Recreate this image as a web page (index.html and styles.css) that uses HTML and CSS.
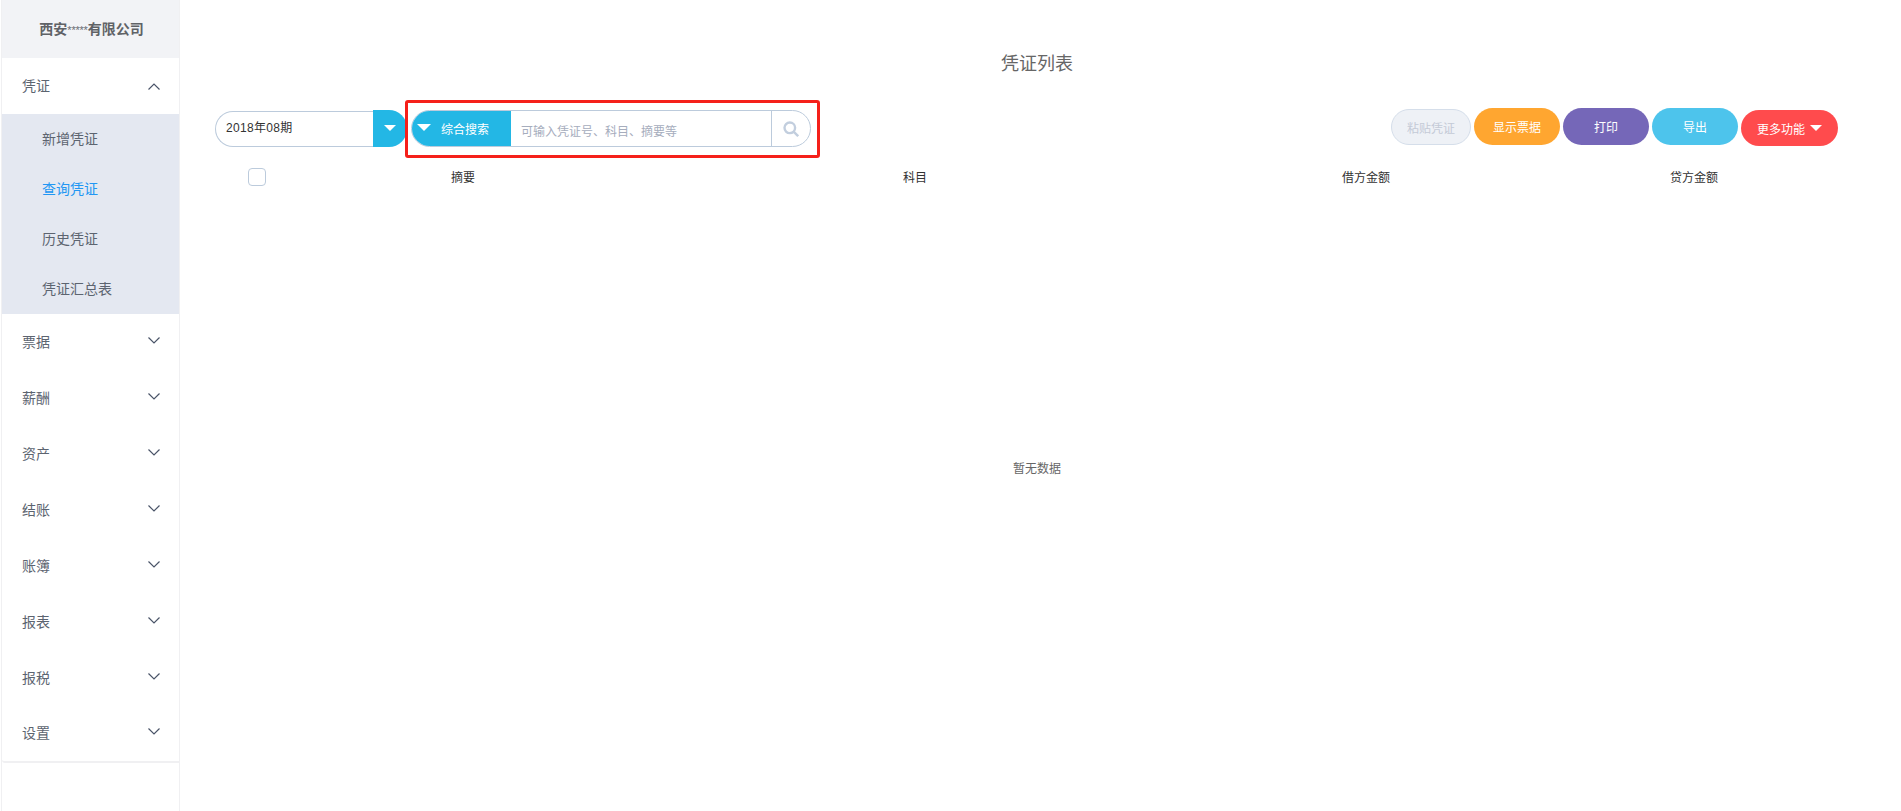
FILE: index.html
```html
<!DOCTYPE html>
<html lang="zh">
<head>
<meta charset="utf-8">
<title>凭证列表</title>
<link rel="stylesheet" href="styles.css">
</head>
<body>
<div class="app">
  <aside class="sidebar">
    <div class="company"><span>西安<span class="stars">*****</span>有限公司</span></div>
    <div class="menu-item"><span>凭证</span><svg class="chev up" viewBox="0 0 12 7"><path d="M.5 6.500 6 1l5.500 5.500"/></svg></div>
    <div class="submenu">
      <div class="sub-item"><span>新增凭证</span></div>
      <div class="sub-item active"><span>查询凭证</span></div>
      <div class="sub-item"><span>历史凭证</span></div>
      <div class="sub-item"><span>凭证汇总表</span></div>
    </div>
    <div class="menu-item"><span>票据</span><svg class="chev" viewBox="0 0 12 7"><path d="M.5.500 6 6l5.500-5.500"/></svg></div>
    <div class="menu-item"><span>薪酬</span><svg class="chev" viewBox="0 0 12 7"><path d="M.5.500 6 6l5.500-5.500"/></svg></div>
    <div class="menu-item"><span>资产</span><svg class="chev" viewBox="0 0 12 7"><path d="M.5.500 6 6l5.500-5.500"/></svg></div>
    <div class="menu-item"><span>结账</span><svg class="chev" viewBox="0 0 12 7"><path d="M.5.500 6 6l5.500-5.500"/></svg></div>
    <div class="menu-item"><span>账簿</span><svg class="chev" viewBox="0 0 12 7"><path d="M.5.500 6 6l5.500-5.500"/></svg></div>
    <div class="menu-item"><span>报表</span><svg class="chev" viewBox="0 0 12 7"><path d="M.5.500 6 6l5.500-5.500"/></svg></div>
    <div class="menu-item"><span>报税</span><svg class="chev" viewBox="0 0 12 7"><path d="M.5.500 6 6l5.500-5.500"/></svg></div>
    <div class="menu-item last"><span>设置</span><svg class="chev" viewBox="0 0 12 7"><path d="M.5.500 6 6l5.500-5.500"/></svg></div>
  </aside>
  <main class="main">
    <h1 class="title">凭证列表</h1>
    <div class="toolbar">
      <div class="filters">
        <div class="period">
          <span class="period-text">2018年08期</span>
          <span class="period-btn"><i class="tri"></i></span>
        </div>
        <div class="search-outline">
          <div class="search">
            <span class="search-type"><i class="tri big"></i><span>综合搜索</span></span>
            <span class="search-input"><span class="placeholder">可输入凭证号、科目、摘要等</span></span>
            <span class="search-btn"><svg viewBox="0 0 16 16" class="mag"><circle cx="6.800" cy="6.800" r="5.300"/><path d="m10.800 10.800 4.400 4.400"/></svg></span>
          </div>
        </div>
      </div>
      <div class="actions">
        <span class="btn disabled">粘贴凭证</span>
        <span class="btn orange">显示票据</span>
        <span class="btn purple">打印</span>
        <span class="btn sky">导出</span>
        <span class="btn red">更多功能<i class="tri"></i></span>
      </div>
    </div>
    <div class="thead">
      <span class="check"></span>
      <span class="col c1">摘要</span>
      <span class="col c2">科目</span>
      <span class="col c3">借方金额</span>
      <span class="col c4">贷方金额</span>
    </div>
    <div class="empty">暂无数据</div>
  </main>
</div>
</body>
</html>
```
FILE: styles.css
```css
* { box-sizing: border-box; }
html, body { margin: 0; height: 100%; }
body {
  font-family: "Liberation Sans", "Noto Sans CJK SC", sans-serif;
  font-size: 12px;
  color: #333;
  background: #fff;
  overflow: hidden;
}
.app { display: flex; height: 811px; }
.sidebar {
  width: 179px;
  flex: none;
  margin-left: 1px;
  border-left: 1px solid #f0f0f2;
  border-right: 1px solid #f0f0f2;
}
.company {
  height: 58px;
  padding: 0 0 2px 2px;
  background: #f2f3f6;
  display: flex;
  align-items: center;
  justify-content: center;
  font-size: 14px;
  font-weight: bold;
  color: #606266;
}
.stars { font-size: 11px; font-weight: normal; letter-spacing: -.2px; color: #6a6d74; }
.menu-item {
  height: 56px;
  padding: 0 19px 0 20px;
  display: flex;
  align-items: center;
  justify-content: space-between;
  font-size: 14px;
  color: #5c6470;
}
.menu-item span { margin-top: -2px; }
.menu-item.last { height: 57px; padding-bottom: 1px; border-bottom: 2px solid #f0f0f2; border-bottom-left-radius: 3px; }
.chev { width: 12px; height: 7px; margin-top: -4px; fill: none; stroke: #4a5468; stroke-width: 1.200; }
.chev.up { margin-top: 0; }
.submenu { background: #e4e8f1; }
.sub-item {
  height: 50px;
  padding: 0 0 2px 40px;
  display: flex;
  align-items: center;
  font-size: 14px;
  color: #5c6470;
}
.sub-item.active { color: #2196f3; }
.main { flex: 1; margin-right: 7px; padding: 0 35px; min-width: 0; }
.title {
  margin: 0;
  padding-top: 52px;
  height: 100px;
  line-height: 24px;
  text-align: center;
  font-size: 18px;
  font-weight: normal;
  color: #666;
}
.toolbar { display: flex; justify-content: space-between; align-items: flex-start; height: 58px; }
.filters { display: flex; align-items: flex-start; }
.tri {
  display: inline-block;
  width: 0; height: 0;
  margin-top: -2px;
  border-left: 6px solid transparent;
  border-right: 6px solid transparent;
  border-top: 6px solid #fff;
}
.tri.big {
  border-left-width: 7px;
  border-right-width: 7px;
  border-top-width: 7px;
}
.period { width: 192px; display: flex; margin-top: 10px; }
.period-text {
  flex: 1;
  height: 36px;
  margin-top: 1px;
  padding-left: 10px;
  line-height: 33px;
  letter-spacing: .3px;
  border: 1px solid #bccbdc;
  border-right: 0;
  border-radius: 18px 0 0 18px;
  color: #333;
}
.period-btn {
  width: 34px;
  height: 37px;
  background: #23b7e5;
  border-radius: 0 18px 18px 0;
  display: flex;
  align-items: center;
  justify-content: center;
}
.search-outline {
  width: 415px;
  height: 58px;
  border: 3px solid #f5201a;
  border-radius: 3px;
  padding: 7px 0 0 3px;
  margin-left: -2px;
  position: relative;
}
.search {
  width: 400px;
  height: 37px;
  display: flex;
  border: 1px solid #bccbdc;
  border-radius: 19px;
  overflow: hidden;
}
.search-type {
  width: 100px;
  margin: -1px 0 -1px -1px;
  background: #23b7e5;
  color: #fff;
  display: flex;
  align-items: center;
  padding-left: 6px;
  gap: 10px;
  flex: none;
}
.search-input { flex: 1; padding-left: 10px; line-height: 35px; color: #a6adbd; }
.placeholder { position: relative; top: 4px; }
.search-btn {
  width: 39px;
  flex: none;
  border-left: 1px solid #bccbdc;
  display: flex;
  align-items: center;
  justify-content: center;
}
.mag { width: 16px; height: 16px; fill: none; stroke: #c2cede; stroke-width: 2.400; }
.actions { display: flex; align-items: flex-start; gap: 3px; margin: 8px 21px 0 0; }
.btn {
  height: 37px;
  width: 86px;
  border-radius: 19px;
  display: flex;
  align-items: center;
  justify-content: center;
  color: #fff;
}
.btn.disabled { width: 80px; height: 36px; margin-top: 1px; background: #eef1f6; border: 1px solid #d5deea; color: #c4cad6; }
.orange { background: #ffa630; }
.purple { background: #7567b8; }
.sky { background: #4dc4ec; }
.btn.red { width: 97px; height: 36px; margin-top: 2px; background: #ff4b4d; gap: 5px; }
.btn.red .tri { margin-top: 0; }
.thead { height: 40px; position: relative; }
.check {
  position: absolute;
  left: 33px;
  top: 10px;
  width: 18px;
  height: 18px;
  border: 1px solid #bccbdc;
  border-radius: 4px;
}
.col { position: absolute; top: 12px; line-height: 16px; color: #333; transform: translateX(-50%); white-space: nowrap; }
.c1 { left: 248px; }
.c2 { left: 700px; }
.c3 { left: 1151px; }
.c4 { left: 1479px; }
.empty { text-align: center; margin-top: 263px; line-height: 16px; color: #666; }
```
